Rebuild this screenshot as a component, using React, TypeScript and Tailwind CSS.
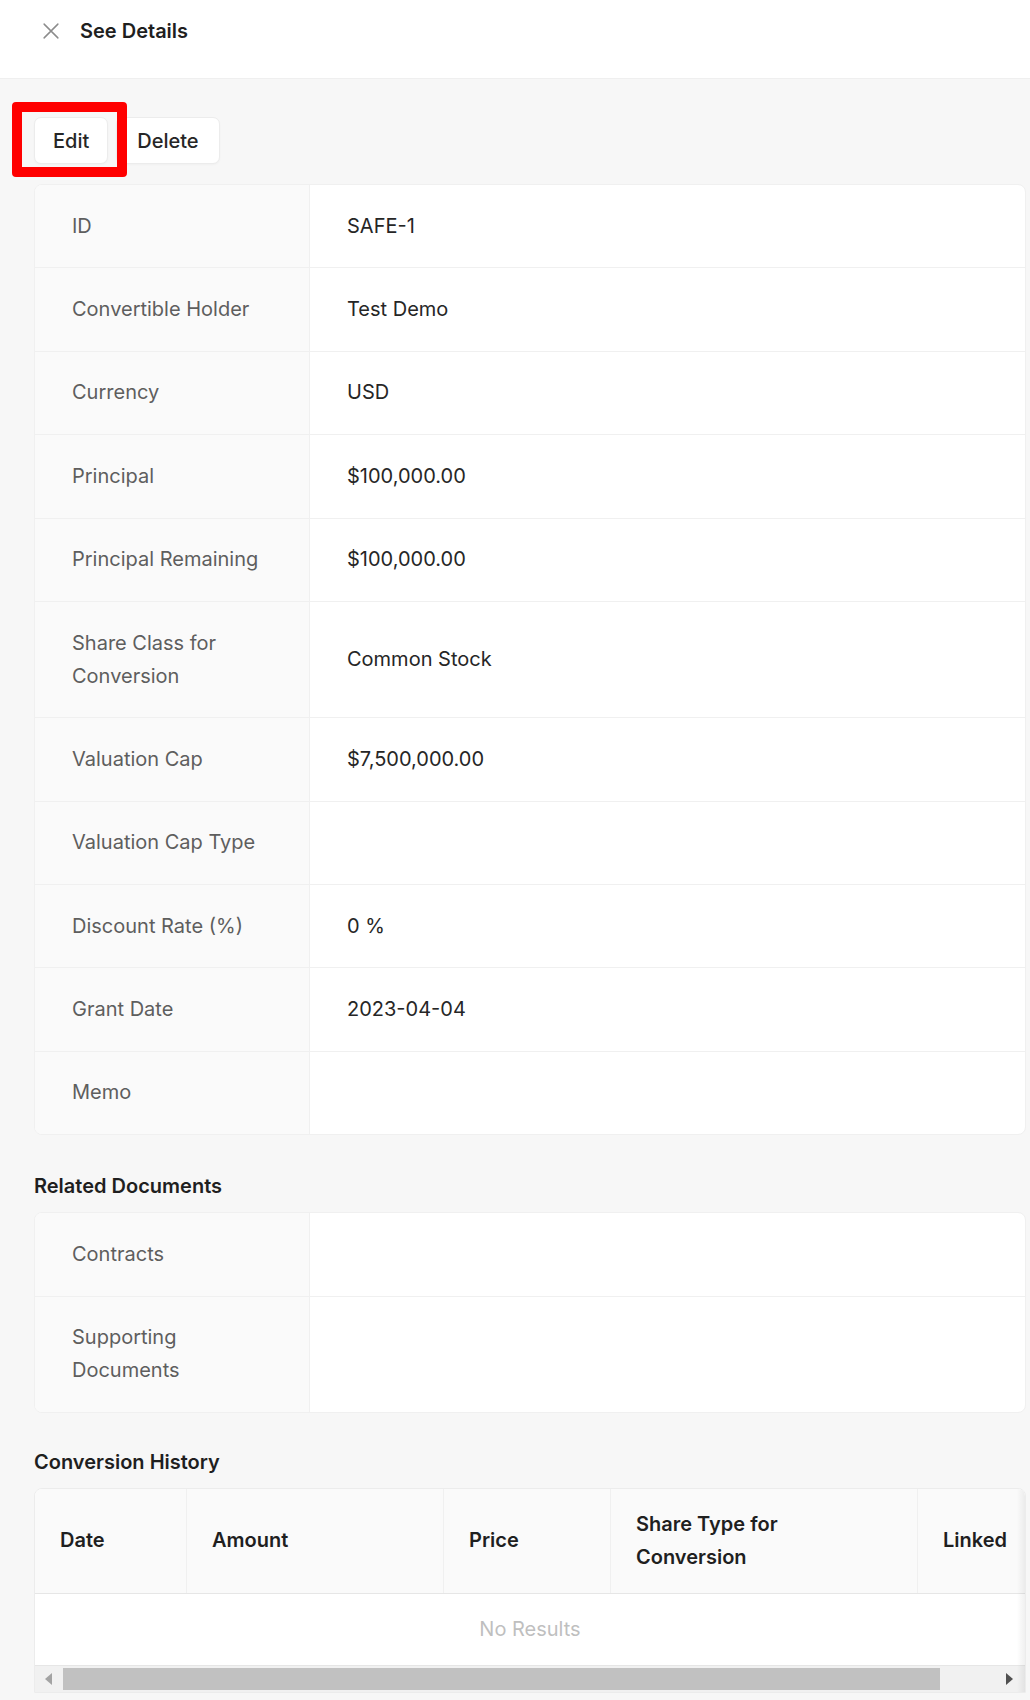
import React from 'react'

interface Field {
    label: string
    value?: string
}

const details: Field[] = [
    { label: 'ID', value: 'SAFE-1' },
    { label: 'Convertible Holder', value: 'Test Demo' },
    { label: 'Currency', value: 'USD' },
    { label: 'Principal', value: '$100,000.00' },
    { label: 'Principal Remaining', value: '$100,000.00' },
    { label: 'Share Class for Conversion', value: 'Common Stock' },
    { label: 'Valuation Cap', value: '$7,500,000.00' },
    { label: 'Valuation Cap Type' },
    { label: 'Discount Rate (%)', value: '0 %' },
    { label: 'Grant Date', value: '2023-04-04' },
    { label: 'Memo' },
]

const documents: Field[] = [{ label: 'Contracts' }, { label: 'Supporting Documents' }]

const columns = [
    { title: 'Date', width: 'w-[152px]' },
    { title: 'Amount', width: 'w-[257px]' },
    { title: 'Price', width: 'w-[167px]' },
    { title: 'Share Type for Conversion', width: 'w-[307px]' },
    { title: 'Linked', width: 'w-[260px]' },
]

const DetailCard: React.FC<{ fields: Field[] }> = ({ fields }) => (
    <div className="rounded-[8px] border border-[#f0f0f0] bg-white overflow-hidden">
        {fields.map((f, idx) => (
            <div
                key={f.label}
                className={`flex ${idx !== fields.length - 1 ? 'border-b border-[#f0f0f0]' : ''}`}
            >
                <div className="w-[275px] shrink-0 bg-[#fafafa] border-r border-[#f0f0f0] pl-[37px] pr-[36px] py-[24.7px] text-[20px] leading-[33px] text-[#5e5e5e]">
                    {f.label}
                </div>
                <div className="flex-1 flex items-center pl-[37px] text-[20px] leading-[33px] text-[#262626]">
                    {f.value}
                </div>
            </div>
        ))}
    </div>
)

export default function App() {
    return (
        <div className="relative min-h-[1700px] bg-[#f7f7f7] font-['Inter',sans-serif]">
            <div className="h-[79px] bg-white border-b border-[#efefef] flex items-start pt-[15px] pl-[40px] gap-[18px]">
                <svg className="mt-[5px]" width="22" height="22" viewBox="0 0 24 24" fill="none" stroke="#8c8c8c" strokeWidth="1.6" strokeLinecap="round">
                    <path d="M4.5 4.5l15 15M19.5 4.5l-15 15" />
                </svg>
                <span className="text-[20px] leading-[33px] font-semibold text-[#1f1f1f]">See Details</span>
            </div>

            <div className="pl-[34px] pr-[4px] pt-[38px]">
                <div className="flex gap-[8px]">
                    <button className="h-[47px] px-[18px] rounded-[7px] bg-white border border-[#ececec] shadow-[0_1px_2px_rgba(0,0,0,0.03)] text-[20px] font-medium text-[#262626]">
                        Edit
                    </button>
                    <button className="h-[47px] px-[20px] rounded-[7px] bg-white border border-[#ececec] shadow-[0_1px_2px_rgba(0,0,0,0.03)] text-[20px] font-medium text-[#262626]">
                        Delete
                    </button>
                </div>

                <div className="mt-[20px]">
                    <DetailCard fields={details} />
                </div>

                <h3 className="mt-[35px] mb-[9px] text-[20px] leading-[33px] font-semibold text-[#1f1f1f]">Related Documents</h3>
                <DetailCard fields={documents} />

                <h3 className="mt-[33px] mb-[9px] text-[20px] leading-[33px] font-semibold text-[#1f1f1f]">Conversion History</h3>
                <div className="relative rounded-t-[8px] border border-[#ececec] bg-white overflow-hidden">
                    <div className="flex h-[105px] bg-[#fafafa] border-b border-[#e6e6e6] w-[1160px]">
                        {columns.map((c, idx) => (
                            <div
                                key={c.title}
                                className={`${c.width} shrink-0 flex items-center pl-[25px] pr-[60px] text-[20px] leading-[33px] font-semibold text-[#1f1f1f] ${idx !== columns.length - 1 ? 'border-r border-[#f0f0f0]' : ''}`}
                            >
                                {c.title}
                            </div>
                        ))}
                    </div>
                    <div className="h-[71px] flex items-center justify-center text-[20px] text-[#bfbfbf]">No Results</div>
                    <div className="flex items-center h-[27px] bg-[#f1f1f1] border-t border-[#e6e6e6]">
                        <div className="w-[28px] flex items-center justify-center">
                            <svg width="8" height="12" viewBox="0 0 8 12"><path d="M7 0v12L0 6z" fill="#a3a3a3" /></svg>
                        </div>
                        <div className="w-[877px] h-[22px] bg-[#c1c1c1]" />
                        <div className="flex-1 flex items-center justify-end pr-[12px]">
                            <svg width="8" height="12" viewBox="0 0 8 12"><path d="M1 0v12l7-6z" fill="#505050" /></svg>
                        </div>
                    </div>
                    <div className="absolute inset-y-0 right-0 w-[8px] bg-gradient-to-l from-black/[0.06] to-transparent" />
                </div>
            </div>

            <div className="absolute left-[12px] top-[102px] w-[115px] h-[75px] border-[10px] border-[#ff0000] rounded-[4px]" />
        </div>
    )
}
